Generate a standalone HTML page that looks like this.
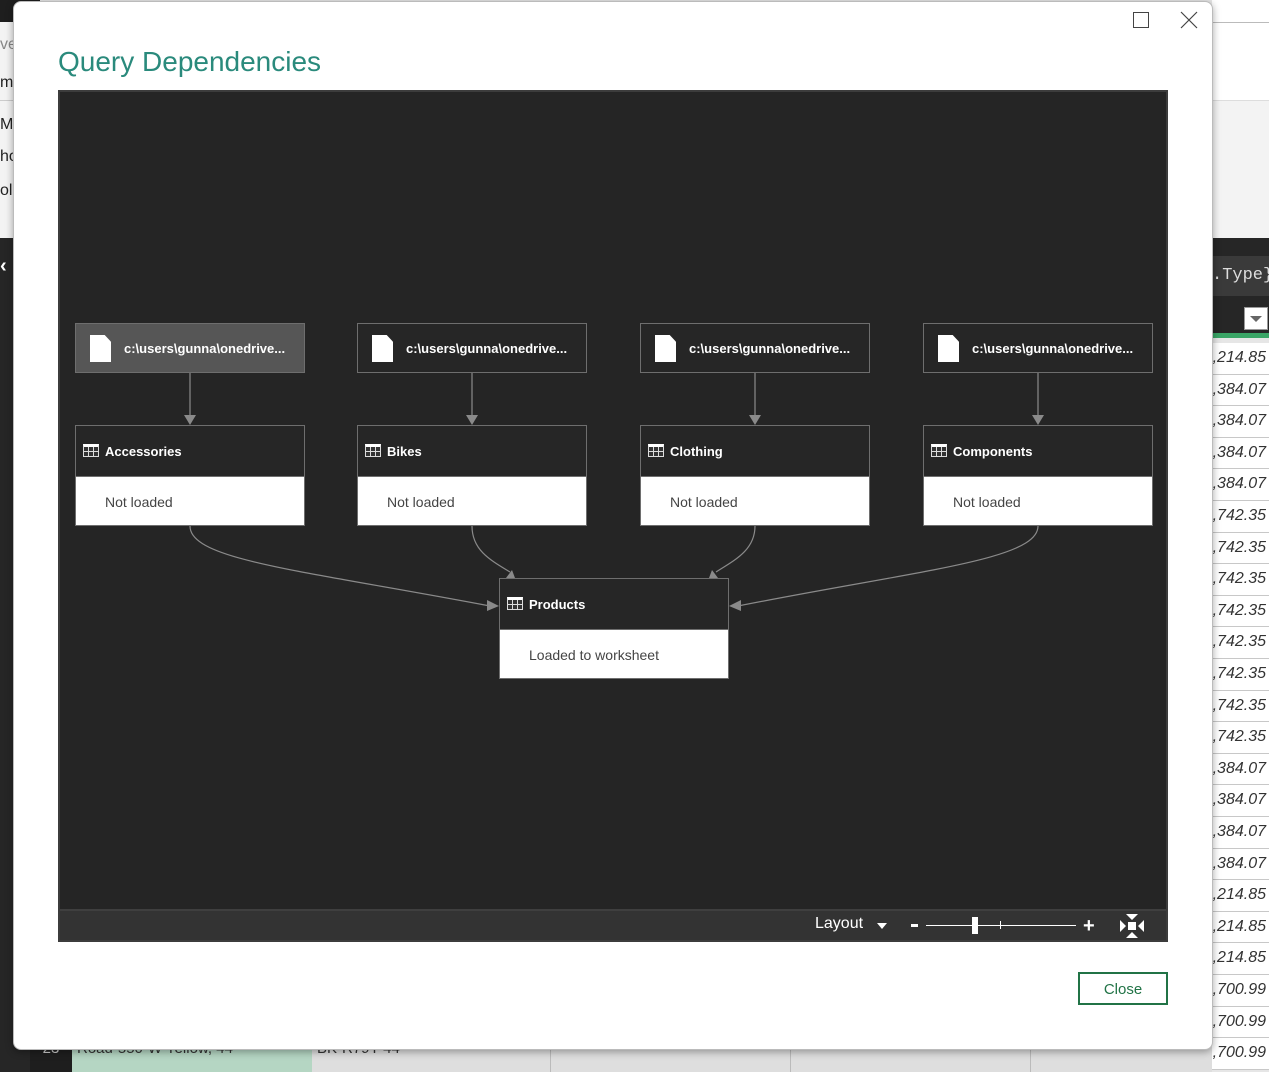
<!DOCTYPE html>
<html><head><meta charset="utf-8"><style>
*{margin:0;padding:0;box-sizing:border-box}
body{width:1269px;height:1072px;overflow:hidden;position:relative;background:#e6e6e6;font-family:"Liberation Sans",sans-serif}
.abs{position:absolute}
.num{position:absolute;left:1212px;width:57px;height:31.6px;border-bottom:1px solid #c8c8c8;background:#fff;font-style:italic;font-size:16px;color:#333;text-align:right;padding-right:3px;line-height:30px}
.node{position:absolute;width:230px;border:1px solid #6e6e6e}
.file{height:50px;background:#262626;color:#fff;font-weight:bold;font-size:13px;line-height:50px;padding-left:48px}
.file.sel{background:#565656}
.doc{position:absolute;left:14px;top:11px;width:21px;height:27px;background:#fff;clip-path:polygon(0 0,70% 0,100% 25%,100% 100%,0 100%)}
.tbl{background:#fff}
.tbl .h{height:51px;background:#262626;border-bottom:1px solid #6e6e6e;color:#fff;font-weight:bold;font-size:13px;line-height:51px;padding-left:29px;position:relative}
.tbl .b{height:48px;color:#444;font-size:14px;line-height:50px;padding-left:29px}
.ic{position:absolute;left:7px;top:18px;width:16px;height:13px;border:1px solid #ddd;border-top:3px solid #fff;background:
linear-gradient(90deg,transparent 4px,#ddd 4px,#ddd 5px,transparent 5px,transparent 9px,#ddd 9px,#ddd 10px,transparent 10px),
linear-gradient(transparent 4px,#ddd 4px,#ddd 5px,transparent 5px);background-color:#333}
</style></head><body>
<div class="abs" style="left:0;top:0;width:40px;height:22px;background:#1e1e1e"></div>
<div class="abs" style="left:0;top:22px;width:40px;height:216px;background:#f3f3f3"></div>
<div class="abs" style="left:0;top:100px;width:40px;height:1px;background:#ccc"></div>
<div class="abs" style="left:0;top:36px;font-size:16px;color:#888">ve</div>
<div class="abs" style="left:0;top:74px;font-size:16px;color:#222">m</div>
<div class="abs" style="left:0;top:116px;font-size:16px;color:#222">Mo</div>
<div class="abs" style="left:0;top:148px;font-size:16px;color:#222">ho</div>
<div class="abs" style="left:0;top:182px;font-size:16px;color:#222">ol</div>
<div class="abs" style="left:0;top:238px;width:30px;height:834px;background:#262626"></div>
<div class="abs" style="left:0;top:255px;font-size:20px;color:#fff;font-weight:bold">&lsaquo;</div>
<div class="abs" style="left:30px;top:1040px;width:42px;height:32px;background:#1e1e1e;color:#ccc;font-size:15px;text-align:center">23</div>
<div class="abs" style="left:72px;top:1040px;width:240px;height:32px;background:#b5d6c3;color:#333;font-size:15px;padding-left:5px">Road-550-W Yellow, 44</div>
<div class="abs" style="left:312px;top:1040px;width:900px;height:32px;background:#dedede;color:#333;font-size:15px;padding-left:5px">BK-R79Y-44</div>
<div class="abs" style="left:550px;top:1040px;width:1px;height:32px;background:#bbb"></div>
<div class="abs" style="left:790px;top:1040px;width:1px;height:32px;background:#bbb"></div>
<div class="abs" style="left:1030px;top:1040px;width:1px;height:32px;background:#bbb"></div>
<div class="abs" style="left:1212px;top:0;width:57px;height:22px;background:#fff"></div>
<div class="abs" style="left:1212px;top:22px;width:57px;height:78px;background:#fff;border-top:1px solid #bbb"></div>
<div class="abs" style="left:1212px;top:100px;width:57px;height:138px;background:#f3f3f3;border-top:1px solid #ddd"></div>
<div class="abs" style="left:1212px;top:238px;width:57px;height:100px;background:#262626"></div>
<div class="abs" style="left:1212px;top:256px;width:57px;height:40px;background:#3a3a3a;color:#ddd;font-family:'Liberation Mono',monospace;font-size:17px;line-height:40px">.Type}</div>
<div class="abs" style="left:1244px;top:307px;width:24px;height:23px;background:#fff;border:1px solid #999"></div>
<div class="abs" style="left:1250px;top:316px;border-left:6px solid transparent;border-right:6px solid transparent;border-top:6px solid #666"></div>
<div class="abs" style="left:1212px;top:333px;width:57px;height:5px;background:#3aa566"></div>
<div id="nums"></div>
<div class="abs" style="left:13px;top:1px;width:1200px;height:1049px;background:#fff;border:1px solid #bbb;border-radius:8px;box-shadow:0 2px 8px rgba(0,0,0,.35)"></div>
<div class="abs" style="left:1133px;top:12px;width:16px;height:16px;border:1px solid #444"></div>
<svg class="abs" style="left:1180px;top:11px" width="18" height="18"><path d="M1 1L17 17M17 1L1 17" stroke="#444" stroke-width="1.2"/></svg>
<div class="abs" style="left:58px;top:46px;font-size:28px;color:#2a8a7c;font-family:'Liberation Sans',sans-serif">Query Dependencies</div>
<div class="abs" style="left:58px;top:90px;width:1110px;height:852px;background:#252525;border:2px solid #3c3c3c"></div>
<div class="abs" style="left:60px;top:909px;width:1106px;height:31px;background:#333;border-top:2px solid #3f3f3f"></div>
<div class="abs" style="left:815px;top:915px;color:#fff;font-size:16px">Layout</div>
<div class="abs" style="left:877px;top:923px;border-left:5px solid transparent;border-right:5px solid transparent;border-top:6px solid #fff"></div>
<div class="abs" style="left:911px;top:924px;width:7px;height:3px;background:#fff"></div>
<div class="abs" style="left:926px;top:925px;width:150px;height:1px;background:#fff"></div>
<div class="abs" style="left:972px;top:917px;width:6px;height:17px;background:#fff"></div>
<div class="abs" style="left:1000px;top:921px;width:1px;height:8px;background:#fff"></div>
<div class="abs" style="left:1083px;top:918px;color:#fff;font-size:20px;font-weight:bold;line-height:16px">+</div>
<svg class="abs" style="left:1119px;top:913px" width="26" height="26"><path d="M7 1H19L13 7Z M7 25H19L13 19Z M1 7V19L7 13Z M25 7V19L19 13Z" fill="#fff"/><rect x="9" y="9" width="8" height="8" fill="#fff"/></svg>
<div class="abs" style="left:1078px;top:972px;width:90px;height:33px;border:2px solid #217346;color:#217346;font-size:15px;text-align:center;line-height:31px">Close</div>
<svg class="abs" style="left:0;top:0" width="1269" height="1072">
<g stroke="#8a8a8a" stroke-width="1.2" fill="none">
<path d="M190 373V417M472 373V417M755 373V417M1038 373V417"/>
<path d="M190 526C190 560 300 570 490 606"/>
<path d="M472 526C472 550 490 560 510 572"/>
<path d="M755 526C755 550 735 560 716 572"/>
<path d="M1038 526C1038 560 920 570 738 606"/>
</g>
<g fill="#8a8a8a">
<path d="M184 415H196L190 425Z M466 415H478L472 425Z M749 415H761L755 425Z M1032 415H1044L1038 425Z"/>
<path d="M499 606L487 600L487 611Z"/>
<path d="M729 606L741 600L741 611Z"/>
<path d="M515 578L506 578L512 570Z M709 578L718 578L712 570Z"/>
</g></svg>
<div class="node file sel" style="left:75px;top:323px"><div class="doc"></div>c:\users\gunna\onedrive...</div>
<div class="node file" style="left:357px;top:323px"><div class="doc"></div>c:\users\gunna\onedrive...</div>
<div class="node file" style="left:640px;top:323px"><div class="doc"></div>c:\users\gunna\onedrive...</div>
<div class="node file" style="left:923px;top:323px"><div class="doc"></div>c:\users\gunna\onedrive...</div>
<div class="node tbl" style="left:75px;top:425px"><div class="h"><div class="ic"></div>Accessories</div><div class="b">Not loaded</div></div>
<div class="node tbl" style="left:357px;top:425px"><div class="h"><div class="ic"></div>Bikes</div><div class="b">Not loaded</div></div>
<div class="node tbl" style="left:640px;top:425px"><div class="h"><div class="ic"></div>Clothing</div><div class="b">Not loaded</div></div>
<div class="node tbl" style="left:923px;top:425px"><div class="h"><div class="ic"></div>Components</div><div class="b">Not loaded</div></div>
<div class="node tbl" style="left:499px;top:578px"><div class="h"><div class="ic"></div>Products</div><div class="b">Loaded to worksheet</div></div>
<script>
var v=["214.85","384.07","384.07","384.07","384.07","742.35","742.35","742.35","742.35","742.35","742.35","742.35","742.35","384.07","384.07","384.07","384.07","214.85","214.85","214.85","700.99","700.99","700.99"];
var h="";for(var i=0;i<v.length;i++){h+='<div class="num" style="top:'+(343+i*31.6)+'px">,'+v[i]+'</div>';}
document.getElementById("nums").innerHTML=h;
</script>
</body></html>
